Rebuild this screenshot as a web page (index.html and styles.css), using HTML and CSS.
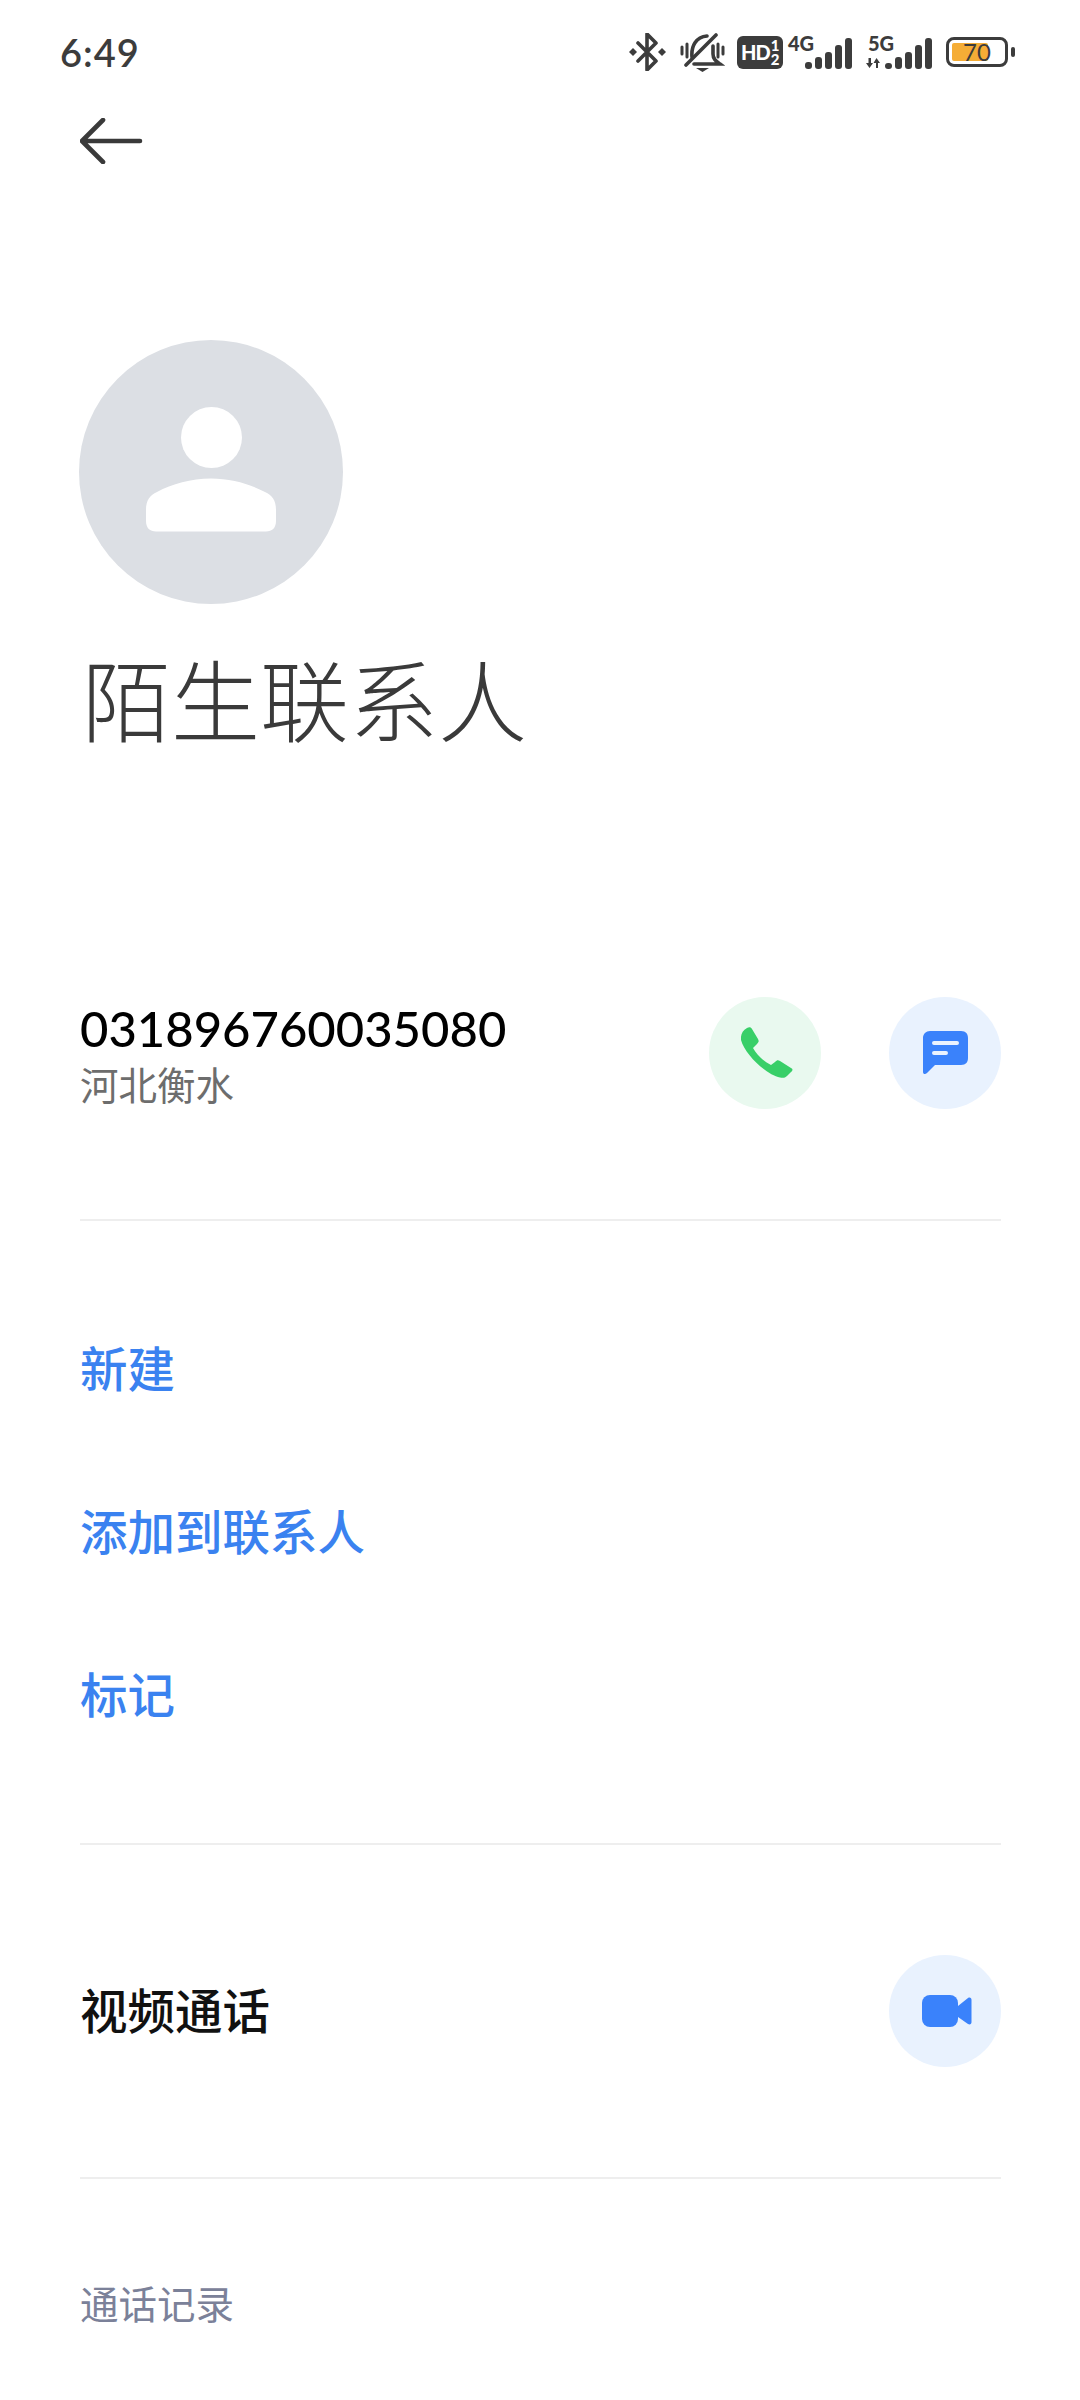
FILE: index.html
```html
<!DOCTYPE html>
<html lang="zh">
<head>
  <meta charset="utf-8">
  <title>陌生联系人</title>
  <link rel="stylesheet" href="styles.css">
</head>
<body>
  <div class="status-bar">
    <span class="time">6:49</span>
    <div class="status-icons">
      <svg class="ic-bt" width="37" height="38" viewBox="0 0 37 38"><path d="M9 10 L27 28 L18 37 V1 L27 10 L9 28" fill="none" stroke="#3c3c3c" stroke-width="3.600" stroke-linejoin="round" stroke-linecap="round"/><path d="M0 19l4-4 4 4-4 4zM29 19l4-4 4 4-4 4z" fill="#3c3c3c"/></svg>
      <svg class="ic-bell" width="45" height="40" viewBox="0 0 45 40"><path d="M12 24 C11 13 16 4 27 3 M33 13 V21 C33 26 36 28 40 31 H14" fill="none" stroke="#3c3c3c" stroke-width="3.600" stroke-linecap="round"/><path d="M6 32 L36 2" stroke="#3c3c3c" stroke-width="3.600" stroke-linecap="round"/><path d="M16 35h13l-6.500 4z" fill="#3c3c3c"/><path d="M2 14v7M7 11v13M38 11v13M43 14v7" stroke="#3c3c3c" stroke-width="3" stroke-linecap="round"/></svg>
      <div class="hd-badge"><span class="hd-txt">HD</span><span class="hd-nums"><span>1</span><span>2</span></span></div>
      <div class="signal">
        <span class="net">4G</span>
        <div class="bars"><i class="b1"></i><i class="b2"></i><i class="b3"></i><i class="b4"></i><i class="b5"></i></div>
      </div>
      <div class="signal signal-5g">
        <span class="net">5G</span>
        <svg class="arrows" width="14" height="10" viewBox="0 0 14 10"><path d="M5 0v5H7L3.500 10 0 5h2.500V0zM10 10V5H7.500L10.500 0 14 5h-2v5z" fill="#3c3c3c"/></svg>
        <div class="bars"><i class="b1"></i><i class="b2"></i><i class="b3"></i><i class="b4"></i><i class="b5"></i></div>
      </div>
      <div class="battery">
        <div class="battery-body"><div class="battery-fill"></div><span class="battery-num">70</span></div>
        <div class="battery-tip"></div>
      </div>
    </div>
  </div>

  <div class="nav">
    <svg width="64" height="46" viewBox="0 0 64 46"><path d="M23 2 L2 23 L23 44 M2 23 H60" fill="none" stroke="#3a3a3a" stroke-width="4.600" stroke-linecap="round" stroke-linejoin="round"/></svg>
  </div>

  <div class="head">
    <div class="avatar">
      <svg width="130" height="125" viewBox="0 0 130 125"><circle cx="65.500" cy="30.500" r="30.500" fill="#fff"/><path d="M0 103 C0 93 4 88 11 85 C26 77 45 71.500 65 71.500 C85 71.500 104 77 119 85 C126 88 130 93 130 103 V114 C130 121 126 124.500 120 124.500 H10 C4 124.500 0 121 0 114 Z" fill="#fff"/></svg>
    </div>
    <h1 class="name">陌生联系人</h1>
  </div>

  <div class="number-row">
    <div class="number-info">
      <div class="number">031896760035080</div>
      <div class="place">河北衡水</div>
    </div>
    <div class="number-actions">
      <div class="round-btn green">
        <svg class="ic-phone" width="52" height="52" viewBox="0 0 52 52"><path d="M6 1 C8 0 10 0 11 2 L17 12 C18 14 18 15 16 17 L12 21 C16 28 22 34 30 38 L34 35 C36 33 37 33 39 34 L50 41 C52 42 52 43 50 45 L46 49 C44 51 42 51 39 50.500 C26 48 4 28 0 13 C-0.500 8 1 4 6 1 Z" fill="#38cf68"/></svg>
      </div>
      <div class="round-btn blue">
        <svg width="45" height="44" viewBox="0 0 45 44"><path d="M7 0 H38 C43 0 45 3 45 7 V27 C45 31 43 34 38 34 H12 L4 42 C2 44 0 43 0 41 V7 C0 3 3 0 7 0 Z" fill="#3a82fb"/><path d="M11 12 H34 M11 22 H23" stroke="#eaf2fe" stroke-width="4" stroke-linecap="round"/></svg>
      </div>
    </div>
  </div>

  <div class="menu">
    <div class="menu-item">新建</div>
    <div class="menu-item">添加到联系人</div>
    <div class="menu-item">标记</div>
  </div>

  <div class="video-row">
    <span class="video-label">视频通话</span>
    <div class="round-btn blue">
      <svg class="ic-video" width="50" height="33" viewBox="0 0 50 33"><rect x="0" y="0" width="36" height="32" rx="8" fill="#3a82fb"/><path d="M36 11 L46 3 C48 2 49.500 3 49.500 5 V27 C49.500 29 48 30 46 29 L36 22 Z" fill="#3a82fb"/></svg>
    </div>
  </div>

  <div class="log-title">通话记录</div>
</body>
</html>
```

FILE: styles.css
```css
* {
  box-sizing: border-box;
}

html, body {
  margin: 0;
  padding: 0;
}

body {
  width: 1080px;
  height: 2400px;
  overflow: hidden;
  background: #fff;
  font-family: "Noto Sans CJK SC", "Noto Sans", sans-serif;
}

/* status bar */
.status-bar {
  height: 104px;
  padding: 0 65px 0 60px;
  display: flex;
  align-items: center;
  justify-content: space-between;
}
.time {
  font-family: Lato, sans-serif;
  font-size: 38px;
  font-weight: 600;
  color: #3c3c3c;
  letter-spacing: 1px;
}
.status-icons {
  display: flex;
  align-items: center;
}
.ic-bt {
  margin-right: 14px;
}
.ic-bell {
  margin-right: 12px;
  margin-top: 2px;
}
.hd-badge {
  width: 46px;
  height: 33px;
  border-radius: 6px;
  background: #3c3c3c;
  color: #fff;
  display: flex;
  align-items: center;
  padding-left: 4px;
  font-family: Lato, sans-serif;
  font-weight: 900;
  margin-right: 5px;
}
.hd-txt {
  font-size: 20px;
  letter-spacing: -1px;
}
.hd-nums {
  display: flex;
  flex-direction: column;
  align-items: center;
  font-size: 15px;
  line-height: 14px;
  margin-left: 1px;
}
.signal {
  display: grid;
  width: 64px;
  height: 34px;
  margin-right: 14px;
}
.signal > * {
  grid-area: 1 / 1;
}
.net {
  font-family: Lato, sans-serif;
  font-size: 20px;
  font-weight: 900;
  line-height: 16px;
  color: #3c3c3c;
  justify-self: start;
  align-self: start;
}
.bars {
  display: flex;
  align-items: flex-end;
  gap: 3px;
  justify-self: end;
  align-self: end;
}
.bars i {
  display: block;
  width: 7px;
  background: #3c3c3c;
  border-radius: 3px;
}
.b1 { height: 7px; }
.b2 { height: 12px; }
.b3 { height: 17px; }
.b4 { height: 24px; }
.b5 { height: 31px; }
.signal-5g {
  width: 66px;
}
.signal-5g .net {
  margin-left: 2px;
}
.arrows {
  justify-self: start;
  align-self: end;
  margin-bottom: 1px;
}
.signal-5g .b1 {
  height: 6px;
}
.battery {
  display: flex;
  align-items: center;
}
.battery-body {
  width: 62px;
  height: 30px;
  border: 3px solid #3c3c3c;
  border-radius: 8px;
  padding: 3px;
  display: flex;
  align-items: center;
  position: relative;
}
.battery-fill {
  width: 36px;
  height: 100%;
  background: #f5ad36;
  border-radius: 2px;
}
.battery-num {
  position: absolute;
  left: 14px;
  top: 0;
  font-family: Lato, sans-serif;
  font-size: 24px;
  line-height: 24px;
  color: #3c3c3c;
}
.battery-tip {
  width: 4px;
  height: 10px;
  margin-left: 3px;
  background: #3c3c3c;
  border-radius: 2px;
}

/* back arrow */
.nav {
  height: 236px;
  padding: 14px 0 0 80px;
}

/* avatar and name */
.head {
  padding: 0 0 0 79px;
}
.avatar {
  width: 264px;
  height: 264px;
  border-radius: 50%;
  background: #dcdfe4;
  display: flex;
  align-items: center;
  justify-content: center;
  padding-bottom: 5px;
}
.name {
  margin: 38px 0 0 3px;
  font-size: 89px;
  font-weight: 300;
  line-height: 110px;
  color: #3a3a3a;
}

/* phone number */
.number-row {
  margin: 245px 79px 0 80px;
  height: 224px;
  border-bottom: 2px solid #eeeeee;
  display: flex;
  justify-content: space-between;
}
.number {
  font-family: Lato, "Noto Sans", sans-serif;
  font-size: 49px;
  font-weight: 500;
  line-height: 60px;
  color: #000;
  margin-top: 1px;
}
.place {
  font-size: 38.500px;
  line-height: 50px;
  color: #6d6d6d;
}
.number-actions {
  display: flex;
  gap: 68px;
}
.round-btn {
  width: 112px;
  height: 112px;
  border-radius: 50%;
  display: flex;
  align-items: center;
  justify-content: center;
}
.round-btn.green {
  background: #e9f9ef;
}
.round-btn.blue {
  background: #e9f2fe;
}
.ic-phone {
  margin-left: 3px;
}
.ic-video {
  margin-left: 4px;
}

/* menu */
.menu {
  margin: 0 79px 0 80px;
  padding-top: 64px;
  height: 624px;
  border-bottom: 2px solid #eeeeee;
}
.menu-item {
  height: 163px;
  display: flex;
  align-items: center;
  font-size: 47.500px;
  font-weight: 500;
  color: #3a82f0;
}

/* video call */
.video-row {
  margin: 0 79px 0 80px;
  height: 334px;
  border-bottom: 2px solid #eeeeee;
  display: flex;
  align-items: center;
  justify-content: space-between;
}
.video-label {
  font-size: 47.500px;
  font-weight: 500;
  color: #111;
  margin-bottom: 5px;
}

.log-title {
  margin: 95px 0 0 80px;
  font-size: 38.500px;
  line-height: 56px;
  color: #7b8199;
}
```
